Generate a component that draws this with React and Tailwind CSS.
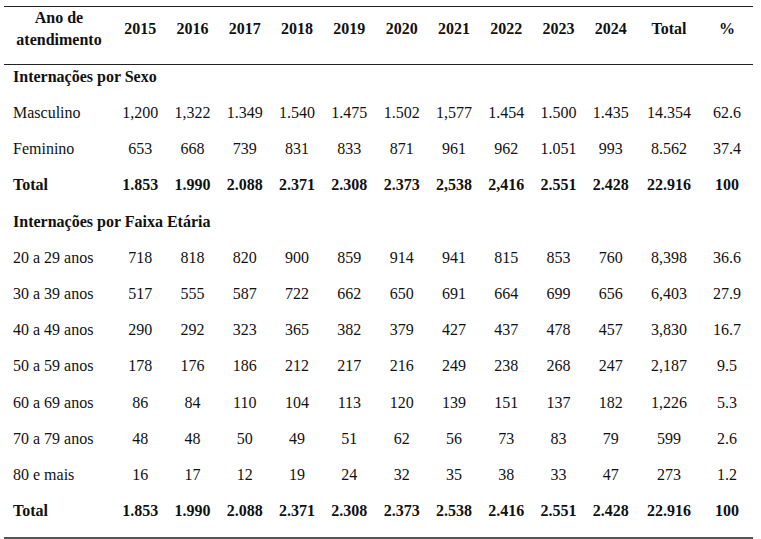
import React from 'react';

const cols = 'grid grid-cols-[110px_repeat(10,52.3px)_64px_52px]';

const years = ['2015', '2016', '2017', '2018', '2019', '2020', '2021', '2022', '2023', '2024'];

const rows = [
  { type: 'section', label: 'Internações por Sexo', first: true },
  { label: 'Masculino', values: ['1,200', '1,322', '1.349', '1.540', '1.475', '1.502', '1,577', '1.454', '1.500', '1.435', '14.354', '62.6'] },
  { label: 'Feminino', values: ['653', '668', '739', '831', '833', '871', '961', '962', '1.051', '993', '8.562', '37.4'] },
  { label: 'Total', bold: true, values: ['1.853', '1.990', '2.088', '2.371', '2.308', '2.373', '2,538', '2,416', '2.551', '2.428', '22.916', '100'] },
  { type: 'section', label: 'Internações por Faixa Etária' },
  { label: '20 a 29 anos', values: ['718', '818', '820', '900', '859', '914', '941', '815', '853', '760', '8,398', '36.6'] },
  { label: '30 a 39 anos', values: ['517', '555', '587', '722', '662', '650', '691', '664', '699', '656', '6,403', '27.9'] },
  { label: '40 a 49 anos', values: ['290', '292', '323', '365', '382', '379', '427', '437', '478', '457', '3,830', '16.7'] },
  { label: '50 a 59 anos', values: ['178', '176', '186', '212', '217', '216', '249', '238', '268', '247', '2,187', '9.5'] },
  { label: '60 a 69 anos', values: ['86', '84', '110', '104', '113', '120', '139', '151', '137', '182', '1,226', '5.3'] },
  { label: '70 a 79 anos', values: ['48', '48', '50', '49', '51', '62', '56', '73', '83', '79', '599', '2.6'] },
  { label: '80 e mais', values: ['16', '17', '12', '19', '24', '32', '35', '38', '33', '47', '273', '1.2'] },
  { label: 'Total', bold: true, values: ['1.853', '1.990', '2.088', '2.371', '2.308', '2.373', '2.538', '2.416', '2.551', '2.428', '22.916', '100'] },
];

const Row = ({ row }) => {
  const height = row.first ? 'h-[30px] pb-[6px]' : 'h-[36.2px]';
  if (row.type === 'section') {
    return (
      <div className={`${height} flex items-center pl-[9px] font-bold`}>{row.label}</div>
    );
  }
  return (
    <div className={`${cols} ${height} items-center ${row.bold ? 'font-bold' : ''}`}>
      <div className="pl-[9px] whitespace-nowrap">{row.label}</div>
      {row.values.map((v, i) => (
        <div key={i} className="text-center whitespace-nowrap">{v}</div>
      ))}
    </div>
  );
};

export default function App() {
  return (
    <div
      className="w-[761px] h-[539px] bg-white text-[#111] text-[16px] overflow-hidden"
      style={{ fontFamily: '"Liberation Serif", "Times New Roman", serif' }}
    >
      <div className="ml-[4px] w-[749px] pt-[6px]">
        <div className="border-t border-[#222]">
          <div className={`${cols} h-[44px] items-center font-bold leading-[22px]`}>
            <div className="text-center">
              Ano de
              <br />
              atendimento
            </div>
            {years.map(y => (
              <div key={y} className="text-center">{y}</div>
            ))}
            <div className="text-center">Total</div>
            <div className="text-center">%</div>
          </div>
          <div className="h-[13px]" />
        </div>
        <div className="border-t border-[#222]">
          {rows.map((row, i) => (
            <Row key={i} row={row} />
          ))}
          <div className="h-[8px]" />
        </div>
        <div className="border-t-2 border-[#555]" />
      </div>
    </div>
  );
}
